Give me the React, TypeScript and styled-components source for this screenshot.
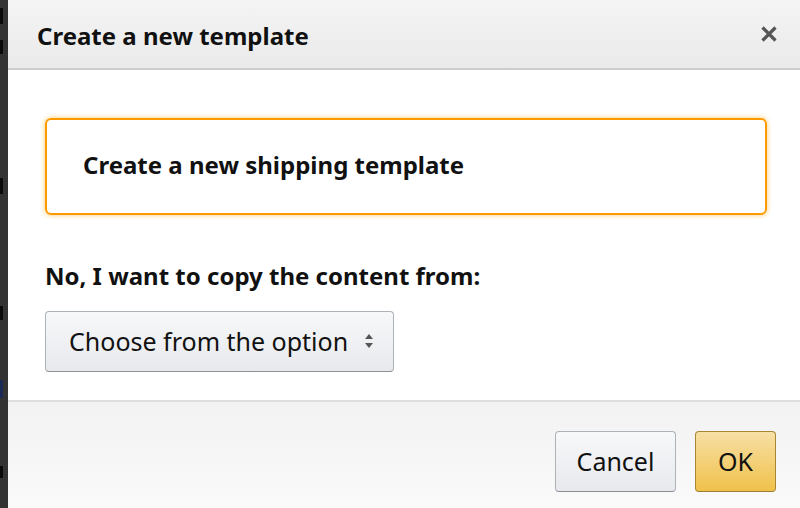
import React from "react";
import styled, { createGlobalStyle } from "styled-components";

const Global = createGlobalStyle`
  html, body { margin: 0; padding: 0; }
  body {
    width: 800px;
    height: 508px;
    overflow: hidden;
    font-family: "Noto Sans", "Open Sans", "Liberation Sans", sans-serif;
    color: #111;
  }
`;

const Page = styled.div`
  display: flex;
  width: 800px;
  height: 508px;
`;

const Backdrop = styled.div`
  width: 8px;
  flex: none;
  background: #333;
  display: flex;
  flex-direction: column;
  overflow: hidden;
`;

const BackMark = styled.div<{ $top: number; $h: number; $c?: string }>`
  margin-top: ${(p) => p.$top}px;
  width: 3px;
  height: ${(p) => p.$h}px;
  background: ${(p) => p.$c || "#0a0a0a"};
  flex: none;
`;

const Dialog = styled.div`
  flex: 1;
  display: flex;
  flex-direction: column;
  background: #fff;
  min-width: 0;
`;

const Header = styled.div`
  height: 68px;
  flex: none;
  display: flex;
  align-items: center;
  justify-content: space-between;
  padding: 0 22px 0 29px;
  background: linear-gradient(#f4f4f4, #eaeaea);
  border-bottom: 2px solid #cdcdcd;
`;

const Title = styled.h1`
  margin: 0;
  font-size: 24px;
  font-weight: 700;
  color: #111;
  padding-top: 2px;
`;

const Close = styled.button`
  border: 0;
  background: none;
  padding: 0;
  width: 18px;
  height: 18px;
  display: flex;
  align-items: center;
  justify-content: center;
  cursor: pointer;
`;

const Body = styled.div`
  flex: 1;
  padding: 48px 33px 0 37px;
  display: flex;
  flex-direction: column;
`;

const OptionBox = styled.div`
  height: 97px;
  box-sizing: border-box;
  border: 2px solid #ff9900;
  border-radius: 6px;
  box-shadow: 0 0 4px 1px rgba(255, 166, 0, 0.4);
  display: flex;
  align-items: center;
  padding-left: 36px;
  padding-bottom: 4px;
  font-size: 24px;
  font-weight: 700;
  color: #111;
`;

const Label = styled.div`
  margin-top: 46px;
  font-size: 24px;
  font-weight: 700;
  line-height: 30px;
  color: #111;
`;

const Select = styled.button`
  margin-top: 20px;
  align-self: flex-start;
  width: 349px;
  height: 61px;
  border: 1px solid #adb1b8;
  border-bottom-color: #8d9096;
  border-radius: 4px;
  background: linear-gradient(#f7f8fa, #e7e9ec);
  display: flex;
  align-items: center;
  justify-content: space-between;
  padding: 0 19px 2px 23px;
  font-family: inherit;
  font-size: 25px;
  color: #111;
  box-sizing: border-box;
`;

const Footer = styled.div`
  height: 108px;
  flex: none;
  border-top: 2px solid #dedede;
  background: linear-gradient(#f2f2f2, #fafafa);
  display: flex;
  align-items: flex-start;
  justify-content: flex-end;
  gap: 19px;
  padding: 29px 24px 0 0;
  box-sizing: border-box;
`;

const Button = styled.button<{ $primary?: boolean }>`
  height: 61px;
  min-width: ${(p) => (p.$primary ? 81 : 121)}px;
  box-sizing: border-box;
  border: 1px solid ${(p) => (p.$primary ? "#a88734" : "#adb1b8")};
  border-bottom-color: ${(p) => (p.$primary ? "#9c7e31" : "#8d9096")};
  border-radius: 4px;
  background: ${(p) =>
    p.$primary
      ? "linear-gradient(#f7dfa5, #f0c14b)"
      : "linear-gradient(#f7f8fa, #e7e9ec)"};
  font-family: inherit;
  font-size: 25px;
  color: #111;
  padding: 0 20px 2px;
  cursor: pointer;
`;

export default function App() {
  return (
    <>
      <Global />
      <Page>
        <Backdrop>
          <BackMark $top={8} $h={16} />
          <BackMark $top={16} $h={14} />
          <BackMark $top={124} $h={16} />
          <BackMark $top={112} $h={14} />
          <BackMark $top={60} $h={18} $c="#1a2a55" />
          <BackMark $top={68} $h={12} />
        </Backdrop>
        <Dialog>
          <Header>
            <Title>Create a new template</Title>
            <Close aria-label="Close">
              <svg width="18" height="18" viewBox="0 0 18 18">
                <path
                  d="M2.5 2.5 L15.5 15.5 M15.5 2.5 L2.5 15.5"
                  stroke="#555"
                  strokeWidth="3.2"
                  strokeLinecap="butt"
                />
              </svg>
            </Close>
          </Header>
          <Body>
            <OptionBox>Create a new shipping template</OptionBox>
            <Label>No, I want to copy the content from:</Label>
            <Select>
              <span>Choose from the option</span>
              <svg width="10" height="16" viewBox="0 0 10 16">
                <path d="M5 1 L9 6 L1 6 Z" fill="#555" />
                <path d="M5 15 L9 10 L1 10 Z" fill="#555" />
              </svg>
            </Select>
          </Body>
          <Footer>
            <Button>Cancel</Button>
            <Button $primary>OK</Button>
          </Footer>
        </Dialog>
      </Page>
    </>
  );
}
